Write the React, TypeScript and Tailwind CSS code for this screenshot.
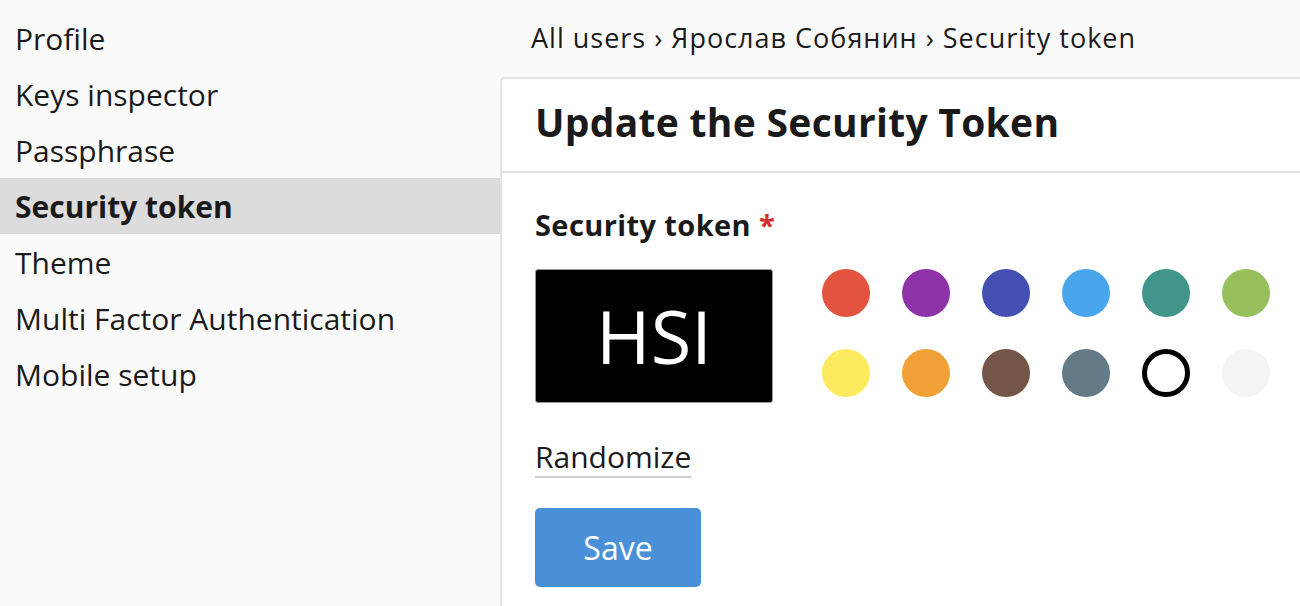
import React, { useState } from 'react';

const menuItems = [
  'Profile',
  'Keys inspector',
  'Passphrase',
  'Security token',
  'Theme',
  'Multi Factor Authentication',
  'Mobile setup',
];

const colors = [
  '#e25440',
  '#8e32a7',
  '#4350b1',
  '#4aa6ec',
  '#41958a',
  '#95c05b',
  '#fdeb5f',
  '#f1a037',
  '#735648',
  '#637a87',
  '#000000',
  '#f4f4f4',
];

export default function App() {
  const [selected, setSelected] = useState(10);

  return (
    <div className="flex h-[606px] w-[1300px] overflow-hidden bg-[#fafafa] font-['Open_Sans',sans-serif] text-[#1a1a1a]">
      {/* Sidebar */}
      <nav className="w-[500px] shrink-0 pt-[10px]">
        {menuItems.map((item) => (
          <div
            key={item}
            className={
              item === 'Security token'
                ? 'flex h-[56px] items-center bg-[#dcdcdc] pl-[15px] text-[30px] font-bold'
                : 'flex h-[56px] items-center pl-[15px] text-[30px]'
            }
          >
            {item}
          </div>
        ))}
      </nav>

      {/* Main */}
      <main className="flex flex-1 flex-col">
        <div className="flex h-[77px] items-center pl-[31px] text-[27px] tracking-[1px]">
          All users › Ярослав Собянин › Security token
        </div>

        <section className="flex-1 rounded-tl-[5px] border-l-2 border-t-2 border-[#e4e4e4] bg-white">
          <div className="flex h-[94px] items-center border-b-2 border-[#e4e4e4] pb-[5px] pl-[33px]">
            <h1 className="text-[39px] font-bold tracking-[0.3px]">Update the Security Token</h1>
          </div>

          <div className="pl-[33px] pt-[34px]">
            <div className="text-[29px] font-bold leading-[36px] tracking-[0.4px]">
              Security token <span className="text-[#d02f2f]">*</span>
            </div>

            <div className="mt-[26px] flex items-start">
              <div className="flex h-[134px] w-[238px] items-center justify-center rounded-[3px] border border-[#9a9a9a] bg-black">
                <span className="text-[74px] leading-none text-white">HSI</span>
              </div>

              <div className="ml-[49px] grid grid-cols-6 gap-x-[32px] gap-y-[32px]">
                {colors.map((c, i) => (
                  <button
                    key={c}
                    onClick={() => setSelected(i)}
                    className={
                      i === selected
                        ? 'h-[48px] w-[48px] rounded-full border-[5px] border-black bg-white'
                        : 'h-[48px] w-[48px] rounded-full'
                    }
                    style={i === selected ? undefined : { backgroundColor: c }}
                  />
                ))}
              </div>
            </div>

            <div className="mt-[35px]">
              <span className="inline-block border-b-2 border-[#cfcfcf] text-[30px] leading-[38px]">
                Randomize
              </span>
            </div>

            <button className="mt-[30px] flex h-[79px] w-[166px] items-center justify-center rounded-[5px] bg-[#4a90d9] text-[32px] text-white">
              Save
            </button>
          </div>
        </section>
      </main>
    </div>
  );
}
